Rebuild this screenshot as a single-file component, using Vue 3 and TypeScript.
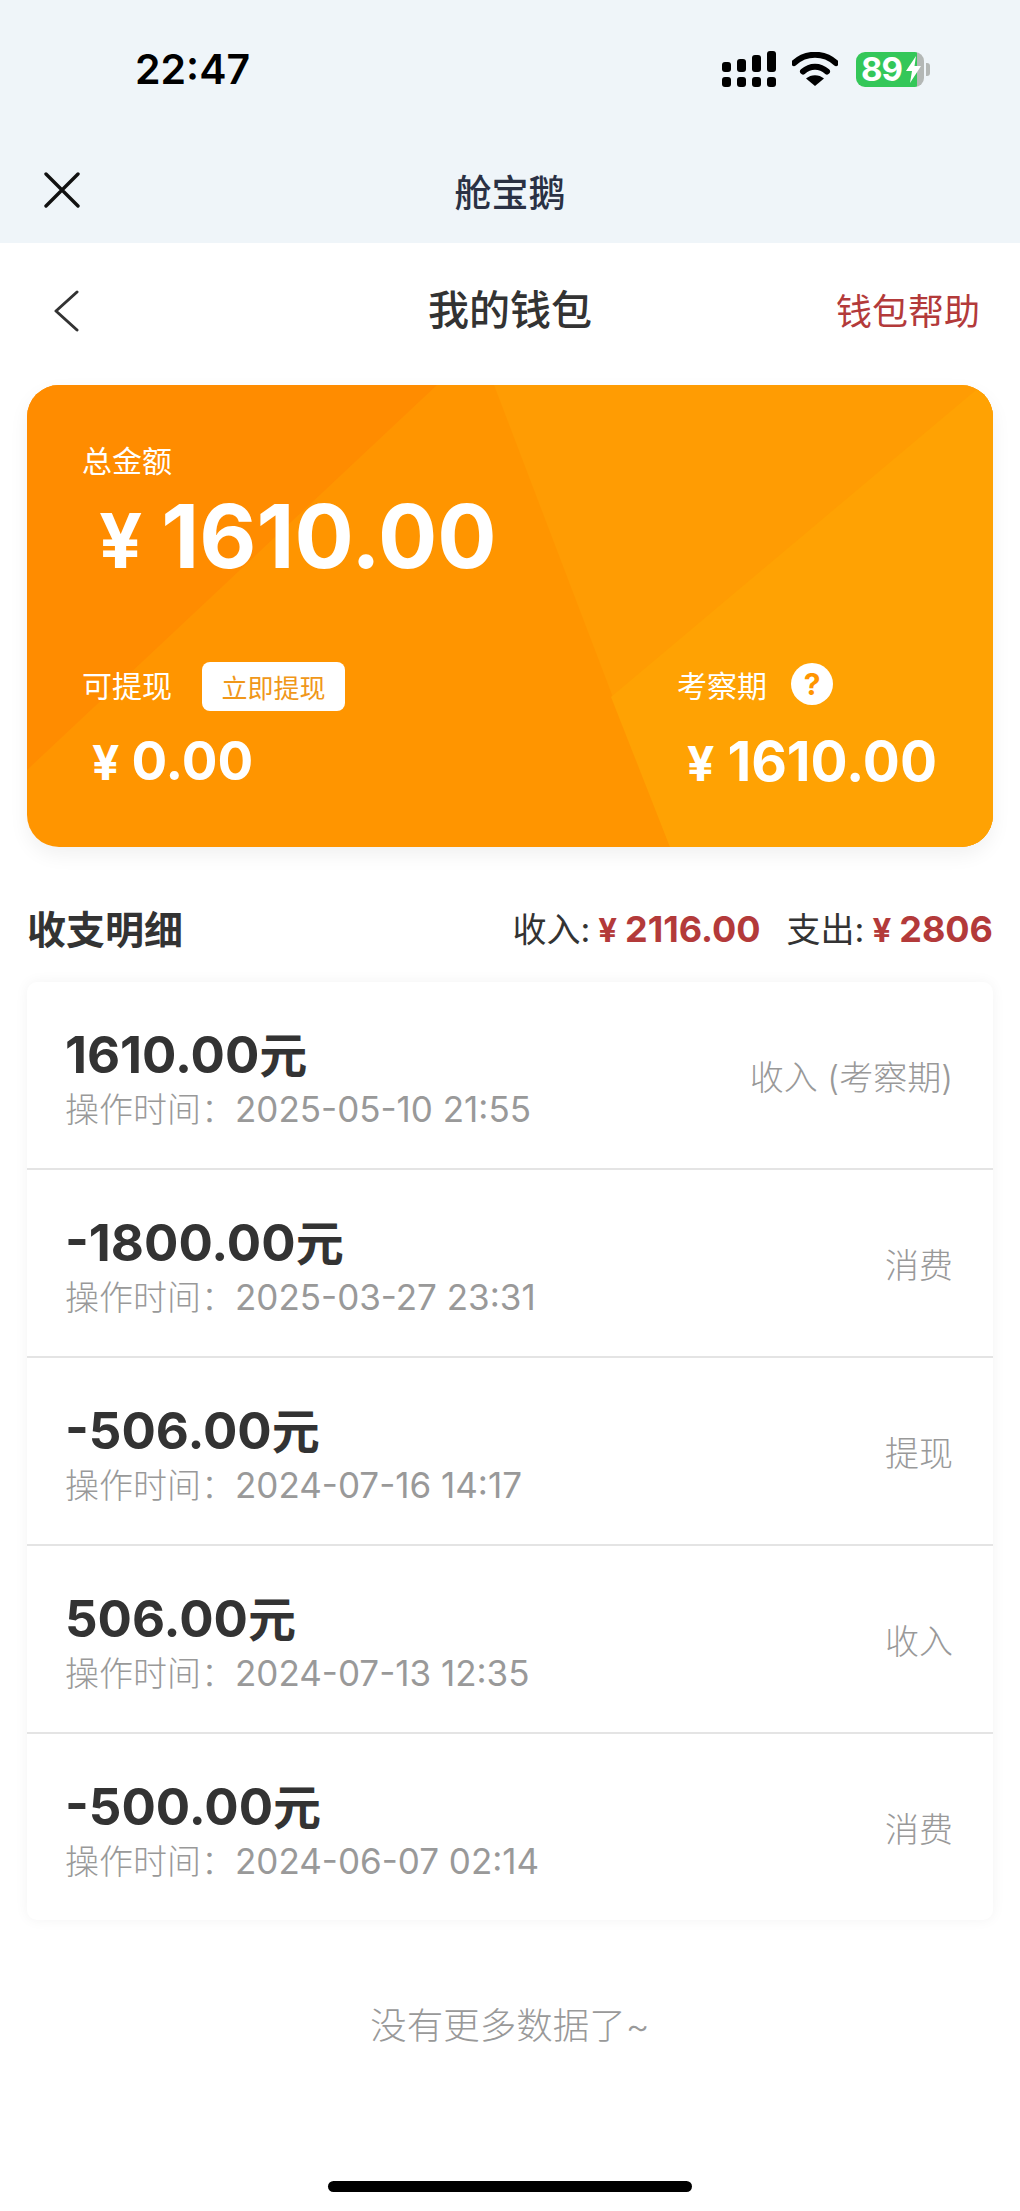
<script setup lang="ts">
interface Record {
  amount: string
  time: string
  kind: string
}

const records: Record[] = [
  { amount: '1610.00', time: '2025-05-10 21:55', kind: '收入 (考察期)' },
  { amount: '-1800.00', time: '2025-03-27 23:31', kind: '消费' },
  { amount: '-506.00', time: '2024-07-16 14:17', kind: '提现' },
  { amount: '506.00', time: '2024-07-13 12:35', kind: '收入' },
  { amount: '-500.00', time: '2024-06-07 02:14', kind: '消费' }
]
</script>

<template>
  <main class="page">
    <header class="top">
      <div class="status">
        <span class="clock">22:47</span>
        <div class="status-icons">
          <svg width="54" height="36" viewBox="0 0 54 36">
            <rect x="0" y="11" width="9" height="10" rx="3" />
            <rect x="15" y="8" width="9" height="13" rx="3" />
            <rect x="30" y="4" width="9" height="17" rx="3" />
            <rect x="45" y="0" width="9" height="21" rx="3" />
            <rect x="0" y="26" width="9" height="10" rx="3" />
            <rect x="15" y="26" width="9" height="10" rx="3" />
            <rect x="30" y="26" width="9" height="10" rx="3" />
            <rect x="45" y="26" width="9" height="10" rx="3" />
          </svg>
          <svg class="wifi" width="46" height="34" viewBox="0 0 46 34">
            <path d="M2 11 C14 0 32 0 44 11" fill="none" stroke="#000" stroke-width="6" stroke-linecap="round" />
            <path d="M11 19.5 C18 13 28 13 35 19.5" fill="none" stroke="#000" stroke-width="6" stroke-linecap="round" />
            <path d="M23 34 L14 26.5 C19 22 27 22 32 26.5 Z" />
          </svg>
          <div class="battery">
            <span class="battery-num">89</span>
            <svg class="bolt" width="15" height="27" viewBox="0 0 15 27">
              <path d="M10 0 L0 15 L6 15 L4 27 L15 10 L8.5 10 Z" fill="#fff" />
            </svg>
          </div>
          <span class="battery-tip"></span>
        </div>
      </div>
      <div class="miniapp-bar">
        <svg class="close" width="36" height="36" viewBox="0 0 36 36">
          <path d="M2 2 L34 34 M34 2 L2 34" fill="none" stroke="#111" stroke-width="3.4" stroke-linecap="round" />
        </svg>
        <span class="app-name">舱宝鹅</span>
      </div>
    </header>

    <div class="title-bar">
      <svg class="back" width="26" height="42" viewBox="0 0 26 42">
        <path d="M24 2 L3 21 L24 40" fill="none" stroke="#333" stroke-width="3" stroke-linecap="round" stroke-linejoin="round" />
      </svg>
      <h1 class="page-title">我的钱包</h1>
      <span class="help">钱包帮助</span>
    </div>

    <section class="wallet">
      <svg class="wallet-bg" viewBox="0 0 966 462" preserveAspectRatio="none">
        <rect width="966" height="462" fill="#ff9500" />
        <polygon points="0,0 410,0 0,385" fill="#ff8c00" />
        <polygon points="467,0 966,0 966,462 643,462" fill="#ff9c03" />
        <polygon points="949,5 966,0 966,462 643,462 584,312" fill="#ffa203" />
      </svg>
      <div class="wallet-body">
        <div class="total-label">总金额</div>
        <div class="total-amount"><span class="yen">¥</span>1610.00</div>
        <div class="wallet-cols">
          <div class="col">
            <div class="col-head">
              <span>可提现</span>
              <button class="withdraw">立即提现</button>
            </div>
            <div class="col-amount"><span class="yen-small">¥</span>0.00</div>
          </div>
          <div class="col">
            <div class="col-head">
              <span>考察期</span>
              <span class="question">?</span>
            </div>
            <div class="col-amount col-amount-right"><span class="yen-small yen-right">¥</span>1610.00</div>
          </div>
        </div>
      </div>
    </section>

    <div class="detail-head">
      <h2 class="detail-title">收支明细</h2>
      <div class="sums">
        <span>收入:</span><b class="red"><span class="yen-red">¥</span>2116.00</b>
        <span class="out-label">支出:</span><b class="red"><span class="yen-red">¥</span>2806</b>
      </div>
    </div>

    <ul class="list">
      <li v-for="r in records" :key="r.time" class="row">
        <div class="row-main">
          <div class="amount">{{ r.amount }}<span class="unit">元</span></div>
          <div class="time"><span class="time-label">操作时间：</span>{{ r.time }}</div>
        </div>
        <span class="kind">{{ r.kind }}</span>
      </li>
    </ul>

    <p class="no-more">没有更多数据了~</p>
    <div class="home-bar"></div>
  </main>
</template>

<style scoped>
.page {
  width: 1020px;
  height: 2211px;
  overflow: hidden;
  background: #fff;
  font-family: Inter, "Noto Sans CJK SC", sans-serif;
  color: #333;
}
.top {
  height: 243px;
  background: #eff5f9;
}
.status {
  height: 138px;
  display: flex;
  justify-content: space-between;
  align-items: center;
  padding: 0 90px 0 135px;
}
.clock {
  font-size: 41px;
  font-weight: 600;
  color: #000;
}
.status-icons {
  display: flex;
  align-items: center;
}
.wifi {
  margin-left: 16px;
}
.battery {
  position: relative;
  margin-left: 18px;
  width: 68px;
  height: 35px;
  border-radius: 9px;
  background: linear-gradient(90deg, #34c759 89%, #b4b8b6 89%);
  display: flex;
  align-items: center;
  padding-left: 5px;
  box-sizing: border-box;
}
.battery-num {
  font-size: 33px;
  font-weight: 700;
  color: #fff;
  line-height: 35px;
  letter-spacing: -1px;
}
.bolt {
  position: absolute;
  right: 3px;
  top: 4px;
}
.battery-tip {
  width: 4px;
  height: 13px;
  margin-left: 2px;
  border-radius: 0 3px 3px 0;
  background: #b4b8b6;
}
.miniapp-bar {
  position: relative;
  height: 105px;
  display: flex;
  align-items: center;
  justify-content: center;
}
.close {
  position: absolute;
  left: 44px;
  top: 34px;
}
.app-name {
  font-size: 37px;
  font-weight: 500;
  color: #2a3144;
}
.title-bar {
  position: relative;
  height: 142px;
  padding-bottom: 14px;
  box-sizing: border-box;
  display: flex;
  align-items: center;
  justify-content: center;
}
.back {
  position: absolute;
  left: 53px;
  top: 47px;
}
.page-title {
  margin: 0;
  font-size: 41px;
  font-weight: 500;
  color: #333;
}
.help {
  position: absolute;
  right: 40px;
  top: 40px;
  font-size: 36px;
  color: #b33a3a;
}
.wallet {
  position: relative;
  margin: 0 27px;
  height: 462px;
  border-radius: 32px;
  overflow: hidden;
  box-shadow: 0 8px 20px rgba(0, 0, 0, 0.06);
}
.wallet-bg {
  position: absolute;
  inset: 0;
  width: 100%;
  height: 100%;
}
.wallet-body {
  position: relative;
  padding: 55px 56px 0 55px;
  color: #fff;
}
.total-label {
  font-size: 30px;
  line-height: 42px;
}
.total-amount {
  margin-top: 4px;
  padding-left: 17px;
  font-size: 88px;
  line-height: 100px;
  font-weight: 700;
}
.yen {
  font-size: 76px;
  margin-right: 19px;
}
.wallet-cols {
  display: flex;
  justify-content: space-between;
  margin-top: 69px;
}
.col-head {
  display: flex;
  align-items: center;
  font-size: 30px;
  height: 50px;
}
.withdraw {
  margin: 4px 0 0 30px;
  width: 143px;
  height: 49px;
  border: 0;
  border-radius: 8px;
  background: #fff;
  color: #f09719;
  font-family: inherit;
  font-size: 26px;
  padding: 0;
}
.question {
  margin-left: 24px;
  width: 42px;
  height: 42px;
  border-radius: 50%;
  background: #fff;
  color: #ff9500;
  font-size: 30px;
  font-weight: 700;
  line-height: 42px;
  text-align: center;
}
.col-amount {
  margin-top: 20px;
  padding-left: 10px;
  font-size: 53px;
  line-height: 64px;
  font-weight: 700;
}
.col-amount-right {
  font-size: 55px;
}
.yen-small {
  font-size: 48px;
  margin-right: 12px;
}
.yen-right {
  margin-right: 13px;
}
.detail-head {
  display: flex;
  justify-content: space-between;
  align-items: center;
  margin: 50px 27px 0;
  height: 60px;
}
.detail-title {
  margin: 0;
  font-size: 39px;
  font-weight: 700;
  color: #333;
}
.sums {
  font-size: 34px;
  color: #333;
}
.red {
  color: #b33a3a;
  font-weight: 700;
  font-size: 36px;
}
.yen-red {
  font-size: 33px;
  margin: 0 8px;
}
.out-label {
  margin-left: 26px;
}
.list {
  list-style: none;
  margin: 25px 27px 0;
  padding: 0;
  border-radius: 10px;
  background: #fff;
  box-shadow: 0 0 14px rgba(0, 0, 0, 0.05);
}
.row {
  height: 186px;
  display: flex;
  justify-content: space-between;
  align-items: center;
  padding: 0 40px 0 38px;
  border-bottom: 2px solid #e4e4e4;
}
.row:last-child {
  border-bottom: 0;
}
.row-main {
  padding-top: 5px;
}
.amount {
  font-size: 51px;
  line-height: 58px;
  font-weight: 700;
  color: #333;
}
.unit {
  font-size: 48px;
}
.time {
  margin-top: 4px;
  font-size: 35px;
  line-height: 40px;
  color: #999;
}
.time-label {
  font-size: 34px;
  font-weight: 300;
}
.kind {
  font-size: 34px;
  font-weight: 300;
  color: #999;
}
.no-more {
  margin: 80px 0 0;
  text-align: center;
  font-size: 36.5px;
  line-height: 52px;
  font-weight: 300;
  color: #999;
}
.home-bar {
  margin: 129px auto 0;
  width: 364px;
  height: 11px;
  border-radius: 6px;
  background: #000;
}
</style>
